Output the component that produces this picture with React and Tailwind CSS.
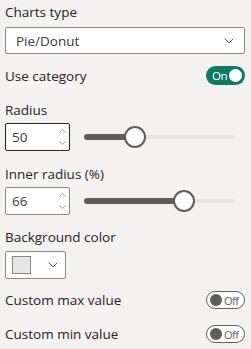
import React from "react";

const font = { fontFamily: '"Segoe UI", "Open Sans", "Noto Sans", sans-serif' };

function Chevron({ className = "" }) {
  return (
    <svg width="10" height="6" viewBox="0 0 10 6" className={className}>
      <path d="M0.5 0.5 L5 5 L9.5 0.5" fill="none" stroke="#605e5c" strokeWidth="1" />
    </svg>
  );
}

function Spin() {
  return (
    <div className="flex flex-col items-center gap-[8px] mr-[3px]">
      <svg width="7" height="4" viewBox="0 0 7 4">
        <path d="M0.5 3.5 L3.5 0.5 L6.5 3.5" fill="none" stroke="#a19f9d" strokeWidth="1" />
      </svg>
      <svg width="7" height="4" viewBox="0 0 7 4">
        <path d="M0.5 0.5 L3.5 3.5 L6.5 0.5" fill="none" stroke="#a19f9d" strokeWidth="1" />
      </svg>
    </div>
  );
}

function NumberInput({ value, focused }) {
  return (
    <div
      className={`w-[65px] h-[28px] bg-white rounded-[2px] flex items-center justify-between border ${
        focused ? "border-[#252423]" : "border-[#8a8886]"
      }`}
    >
      <span className="pl-[6px] text-[13.5px] leading-[18px] text-[#3b3a39]">{value}</span>
      <Spin />
    </div>
  );
}

function Slider({ pct }) {
  return (
    <div className="relative flex-1 h-[22px] ml-[14px] mr-[10px] flex items-center">
      <div className="absolute left-0 right-0 h-[4px] rounded-full bg-[#e8e6e4]" />
      <div
        className="absolute left-0 h-[6px] rounded-full bg-[#605e5c]"
        style={{ width: `${pct}%` }}
      />
      <div
        className="absolute w-[22px] h-[22px] rounded-full bg-white border-2 border-[#605e5c] -translate-x-1/2"
        style={{ left: `${pct}%` }}
      />
    </div>
  );
}

function ToggleOn() {
  return (
    <div className="w-[39px] h-[19px] rounded-full bg-[#117865] flex items-center justify-end pr-[3px] gap-[2px]">
      <span className="text-[11.5px] text-white leading-none tracking-[-0.5px]">On</span>
      <div className="w-[13px] h-[13px] rounded-full bg-white" />
    </div>
  );
}

function ToggleOff() {
  return (
    <div className="w-[39px] h-[18px] rounded-full bg-white border border-[#605e5c] flex items-center pl-[3px] gap-[2px]">
      <div className="w-[12px] h-[12px] rounded-full bg-[#605e5c]" />
      <span className="text-[11px] text-[#605e5c] leading-none tracking-[-0.5px]">Off</span>
    </div>
  );
}

export default function App() {
  return (
    <div
      className="w-[251px] h-[349px] bg-[#f3f2f1] text-[#252423] pl-[5px] pr-[6px] pt-[3px] overflow-hidden text-[13.5px] leading-[18px]"
      style={font}
    >
      <div className="h-[18px]">Charts type</div>
      <div className="mt-[6px] h-[27px] bg-white border border-[#8a8886] rounded-[2px] flex items-center justify-between pl-[10px] pr-[10px]">
        <span className="text-[#3b3a39]">Pie/Donut</span>
        <Chevron />
      </div>

      <div className="mt-[12px] flex items-center justify-between h-[19px]">
        <span>Use category</span>
        <ToggleOn />
      </div>

      <div className="mt-[16px] h-[18px]">Radius</div>
      <div className="mt-[4px] flex items-center h-[28px]">
        <NumberInput value="50" focused />
        <Slider pct={34} />
      </div>

      <div className="mt-[14px] h-[18px]">Inner radius (%)</div>
      <div className="mt-[4px] flex items-center h-[28px]">
        <NumberInput value="66" />
        <Slider pct={66} />
      </div>

      <div className="mt-[13px] h-[18px]">Background color</div>
      <div className="mt-[5px] w-[61px] h-[28px] bg-white border border-[#8a8886] rounded-[2px] flex items-center pl-[6px]">
        <div className="w-[19px] h-[18px] bg-[#e6e6e6] border border-[#8a8886]" />
        <Chevron className="ml-[17px]" />
      </div>

      <div className="mt-[12px] flex items-center justify-between h-[18px]">
        <span>Custom max value</span>
        <ToggleOff />
      </div>
      <div className="mt-[16px] flex items-center justify-between h-[18px]">
        <span>Custom min value</span>
        <ToggleOff />
      </div>
    </div>
  );
}
